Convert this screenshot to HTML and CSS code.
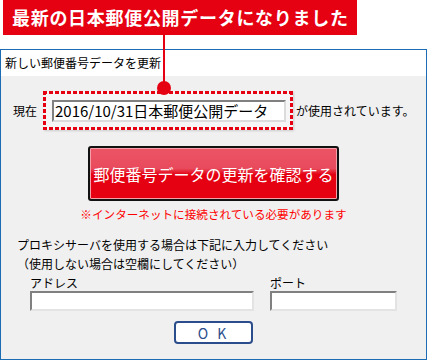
FILE: index.html
```html
<!DOCTYPE html>
<html lang="ja">
  <head>
    <meta charset="UTF-8" />
    <meta name="viewport" content="width=device-width, initial-scale=1.0" />
    <title>郵便番号データを更新</title>
    <link rel="stylesheet" href="styles.css">
  </head>
  <body>
    <div class="page">
      <div class="callout">最新の日本郵便公開データになりました</div>
      <div class="callout-line"></div>
      <div class="callout-dot"></div>

      <div class="window">
        <div class="title-bar">新しい郵便番号データを更新</div>
        <div class="win-body">
          <div class="current-row">
            <span class="current-label">現在</span>
            <div class="highlight">
              <div class="data-field">2016/10/31日本郵便公開データ</div>
            </div>
            <span class="current-suffix">が使用されています。</span>
          </div>

          <button class="update-btn">郵便番号データの更新を確認する</button>
          <p class="notice">※インターネットに接続されている必要があります</p>

          <p class="proxy-text">プロキシサーバを使用する場合は下記に入力してください<br>（使用しない場合は空欄にしてください）</p>

          <div class="proxy-fields">
            <div class="field address">
              <label>アドレス</label>
              <input type="text" />
            </div>
            <div class="field port">
              <label>ポート</label>
              <input type="text" />
            </div>
          </div>

          <button class="ok-btn">O K</button>
        </div>
      </div>
    </div>
  </body>
</html>
```

FILE: styles.css
```css
body {
  margin: 0;
  background-color: #ffffff;
  font-family: "Noto Sans CJK JP", "Noto Sans", sans-serif;
  color: #000000;
}

.page {
  position: relative;
  width: 429px;
  height: 363px;
  overflow: hidden;
}

.callout {
  margin-left: 3px;
  width: 345px;
  height: 35px;
  padding-left: 9px;
  background-color: #e50012;
  color: #ffffff;
  font-size: 18px;
  font-weight: bold;
  letter-spacing: 0.7px;
  line-height: 35px;
  white-space: nowrap;
}

/* leader line from the callout down to the date box */
.callout-line {
  position: absolute;
  left: 163px;
  top: 35px;
  width: 2px;
  height: 53px;
  background-color: #e50012;
  z-index: 2;
}

.callout-dot {
  position: absolute;
  left: 157px;
  top: 81px;
  width: 14px;
  height: 14px;
  border-radius: 50%;
  background-color: #e50012;
  z-index: 2;
}

.window {
  margin-top: 14px;
  width: 425px;
  height: 309px;
  border: 1px solid #1c6cb4;
  background-color: #f0f0f0;
}

.title-bar {
  height: 26px;
  padding-left: 4px;
  background-color: #ffffff;
  font-size: 12px;
  line-height: 26px;
}

.win-body {
  display: flex;
  flex-direction: column;
  font-size: 12px;
}

.current-row {
  display: flex;
  align-items: center;
  height: 39px;
  margin-top: 15px;
  padding-left: 12px;
}

.current-label {
  width: 24px;
  margin-right: 6px;
  line-height: 16px;
}

/* red dashed frame drawn with gradients to get square dashes */
.highlight {
  display: flex;
  align-items: center;
  justify-content: center;
  width: 250px;
  height: 39px;
  margin-right: 3px;
  background:
    repeating-linear-gradient(90deg, #e50012 0 4px, transparent 4px 6px) top left / 100% 3px no-repeat,
    repeating-linear-gradient(90deg, #e50012 0 4px, transparent 4px 6px) bottom left / 100% 3px no-repeat,
    repeating-linear-gradient(180deg, #e50012 0 4px, transparent 4px 6px) top left / 3px 100% no-repeat,
    repeating-linear-gradient(180deg, #e50012 0 4px, transparent 4px 6px) top right / 3px 100% no-repeat,
    #f6f6f6;
  box-shadow: 1px 1px 2px rgba(0, 0, 0, 0.15);
}

.data-field {
  width: 229px;
  height: 18px;
  margin-left: 2px;
  padding-left: 1px;
  border-top: 2px solid #808080;
  border-left: 2px solid #808080;
  border-bottom: 2px solid #dcdcdc;
  border-right: 2px solid #dcdcdc;
  background-color: #ffffff;
  font-size: 15px;
  line-height: 18px;
  white-space: nowrap;
}

.current-suffix {
  line-height: 16px;
  white-space: nowrap;
}

.update-btn {
  width: 251px;
  height: 55px;
  margin: 16px auto 0;
  padding: 0;
  border: 2px solid #111111;
  border-radius: 3px;
  background: linear-gradient(to bottom, #ec5566 0%, #e84a5c 40%, #e50012 52%, #e50012 100%);
  box-shadow: inset 0 0 0 1px #f5a0a8;
  color: #ffffff;
  font-family: "Noto Sans CJK JP", sans-serif;
  font-size: 16px;
  cursor: pointer;
}

.notice {
  margin: 5px 0 0;
  color: #ff0000;
  font-size: 11.6px;
  line-height: 16px;
  text-align: center;
  white-space: nowrap;
}

.proxy-text {
  margin: 13px 0 0;
  padding-left: 16px;
  line-height: 19px;
  white-space: nowrap;
}

.proxy-fields {
  display: flex;
  gap: 16px;
  margin-top: 2px;
  padding-left: 29px;
}

.field {
  display: flex;
  flex-direction: column;
}

.field label {
  line-height: 16px;
}

.field input {
  height: 16px;
  margin: 0;
  padding: 0;
  border-top: 2px solid #808080;
  border-left: 2px solid #808080;
  border-bottom: 2px solid #e3e3e3;
  border-right: 2px solid #e3e3e3;
  background-color: #ffffff;
}

.address input {
  width: 220px;
}

.port input {
  width: 123px;
}

.ok-btn {
  width: 79px;
  height: 23px;
  margin: 10px auto 0;
  padding: 0;
  border: 2px solid #2b4d8c;
  border-radius: 4px;
  background-color: #ffffff;
  color: #2b4d8c;
  font-family: "Noto Sans CJK JP", sans-serif;
  font-size: 14px;
  line-height: 18px;
  letter-spacing: 3px;
  cursor: pointer;
}
```
